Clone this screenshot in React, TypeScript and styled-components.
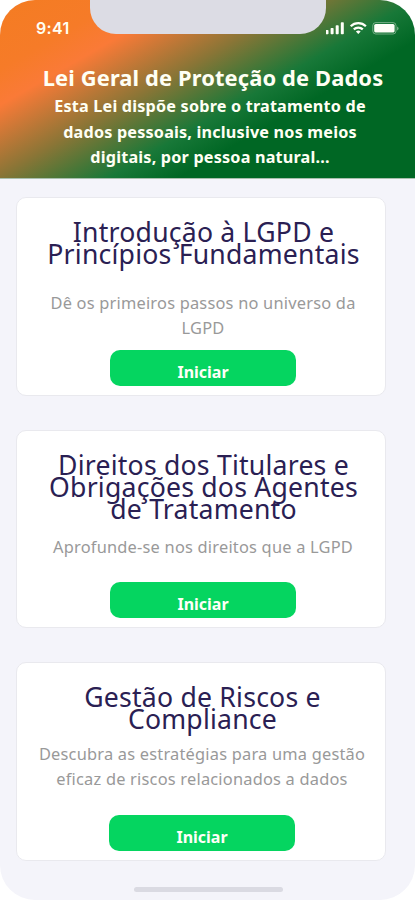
import React from "react";
import styled, { createGlobalStyle } from "styled-components";

const GlobalStyle = createGlobalStyle`
  * { box-sizing: border-box; }
  body { margin: 0; background: #fff; font-family: "Noto Sans", sans-serif; }
`;

const Phone = styled.div`
  width: 415px;
  height: 900px;
  overflow: hidden;
  border-radius: 35px;
  background: #f4f4fa;
  display: flex;
  flex-direction: column;
`;

const Header = styled.header`
  height: 179px;
  flex: none;
  color: #fffff4;
  border-bottom: 1px solid #a9bfae;
  background: linear-gradient(150deg, #f47c22 0, #f67b28 60px, #fa7a37 91px, #8a7536 152px, #187838 208px, #006724 243px);
`;

const StatusBar = styled.div`
  display: grid;
  grid-template-columns: 90px 236px 1fr;
  height: 62px;
`;

const Clock = styled.span`
  font: 600 16px/20px Inter, sans-serif;
  letter-spacing: 0.3px;
  padding: 18px 0 0 36px;
`;

const Notch = styled.div`
  height: 34px;
  background: #dcdce4;
  border-radius: 0 0 26px 26px;
`;

const StatusIcons = styled.svg`
  display: block;
  width: 89px;
  height: 45px;
`;

const HeaderTitle = styled.h1`
  margin: 0 0 0 11px;
  font-size: 21.9px;
  letter-spacing: 0.12px;
  line-height: 32px;
  font-weight: 700;
  text-align: center;
  white-space: nowrap;
`;

const HeaderText = styled.p`
  margin: 0 0 0 5px;
  font-size: 16.2px;
  letter-spacing: 0.19px;
  line-height: 25.5px;
  font-weight: 700;
  text-align: center;
`;

const CardList = styled.main`
  display: flex;
  flex-direction: column;
  gap: 34px;
  padding: 18px 29px 0 16px;
`;

const Card = styled.section<{ $shift: number }>`
  height: 198.5px;
  border: 1px solid #e9e9ee;
  border-radius: 10px;
  background: #fff;
  display: flex;
  flex-direction: column;
  align-items: center;
  padding: 23px 0 9px ${(p) => p.$shift}px;
  text-align: center;
`;

const CardTitle = styled.h2`
  margin: 0;
  padding-left: 1px;
  font-size: 26.6px;
  letter-spacing: 0.22px;
  line-height: 22.4px;
  font-weight: 400;
  color: #2a2053;
  white-space: nowrap;
`;

const CardText = styled.p<{ $gap: number }>`
  margin: ${(p) => p.$gap}px 0 0;
  font-size: 16.4px;
  letter-spacing: 0.21px;
  line-height: 25.5px;
  color: #999;
  white-space: nowrap;
`;

const StartButton = styled.button`
  width: 186px;
  height: 36px;
  margin-top: auto;
  flex: none;
  border: 0;
  border-radius: 10px;
  padding: 8px 0 0;
  background: #05d560;
  color: #fffff8;
  font: 700 16px/28px "Noto Sans", sans-serif;
`;

const HomeIndicator = styled.div`
  width: 149px;
  height: 5px;
  flex: none;
  margin: auto 0 8.5px 133.5px;
  border-radius: 3px;
  background: #dadae2;
`;

const modules = [
  {
    title: ["Introdução à LGPD e", "Princípios Fundamentais"],
    text: ["Dê os primeiros passos no universo da", "LGPD"],
    gap: 24,
    shift: 4,
  },
  {
    title: ["Direitos dos Titulares e", "Obrigações dos Agentes", "de Tratamento"],
    text: ["Aprofunde-se nos direitos que a LGPD"],
    gap: 13.5,
    shift: 4,
  },
  {
    title: ["Gestão de Riscos e", "Compliance"],
    text: ["Descubra as estratégias para uma gestão", "eficaz de riscos relacionados a dados"],
    gap: 10,
    shift: 2,
  },
];

const Lines = ({ items }: { items: string[] }) => (
  <>
    {items.map((line, i) => (
      <React.Fragment key={line}>
        {i > 0 && <br />}
        {line}
      </React.Fragment>
    ))}
  </>
);

export default function App() {
  return (
    <>
      <GlobalStyle />
      <Phone>
        <Header>
          <StatusBar>
            <Clock>9:41</Clock>
            <Notch />
            <StatusIcons viewBox="326 0 89 45" fill="#fffff8">
              <rect x="325.5" y="30" width="3" height="4.2" rx="0.8" />
              <rect x="330.6" y="28" width="3" height="6.2" rx="0.8" />
              <rect x="335.7" y="25.3" width="3" height="8.9" rx="0.8" />
              <rect x="340.8" y="22.3" width="3" height="11.9" rx="0.8" />
              <g fill="none" stroke="#fffff8" strokeWidth="2.2">
                <path d="M350.7 26.2a10.8 10.8 0 0 1 15.2 0" />
                <path d="M353.8 29.4a6.4 6.4 0 0 1 9 0" />
              </g>
              <path d="M355.9 31.6a3.5 3.5 0 0 1 4.8 0l-2.4 2.5z" />
              <rect x="372.8" y="22.6" width="23.2" height="11.4" rx="3" fill="none" stroke="#fffff8" strokeOpacity="0.4" />
              <rect x="374.2" y="24" width="20.4" height="8.6" rx="1.6" />
              <path d="M397.2 26.4v4a2.2 2.2 0 0 0 0-4" opacity="0.5" />
            </StatusIcons>
          </StatusBar>
          <HeaderTitle>Lei Geral de Proteção de Dados</HeaderTitle>
          <HeaderText>
            <Lines items={["Esta Lei dispõe sobre o tratamento de", "dados pessoais, inclusive nos meios", "digitais, por pessoa natural..."]} />
          </HeaderText>
        </Header>
        <CardList>
          {modules.map((m) => (
            <Card key={m.title[0]} $shift={m.shift}>
              <CardTitle><Lines items={m.title} /></CardTitle>
              <CardText $gap={m.gap}><Lines items={m.text} /></CardText>
              <StartButton>Iniciar</StartButton>
            </Card>
          ))}
        </CardList>
        <HomeIndicator />
      </Phone>
    </>
  );
}
